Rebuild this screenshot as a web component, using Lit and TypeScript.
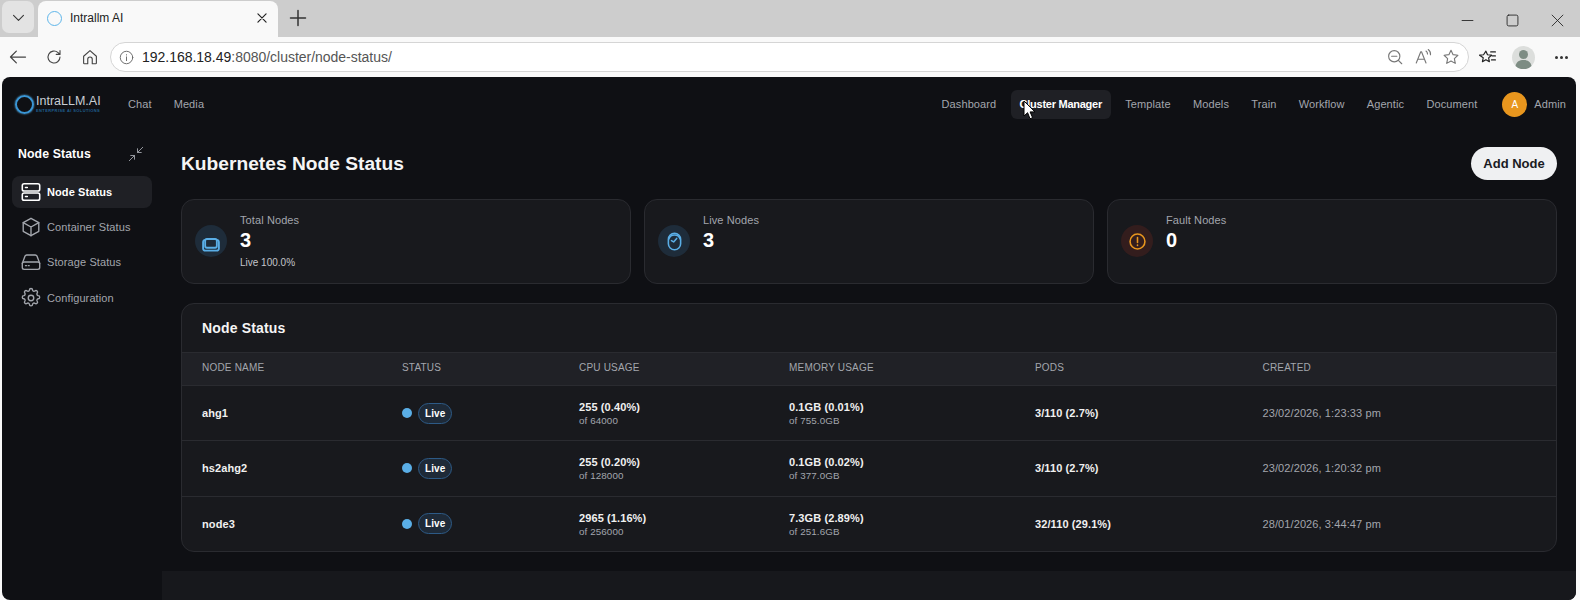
import { LitElement, html, css, svg } from "lit";
import { customElement } from "lit/decorators.js";

const NAV_RIGHT = ["Dashboard", "Cluster Manager", "Template", "Models", "Train", "Workflow", "Agentic", "Document"];

const rows = [
  { name: "ahg1", cpu: "255 (0.40%)", cpuOf: "of 64000", mem: "0.1GB (0.01%)", memOf: "of 755.0GB", pods: "3/110 (2.7%)", created: "23/02/2026, 1:23:33 pm" },
  { name: "hs2ahg2", cpu: "255 (0.20%)", cpuOf: "of 128000", mem: "0.1GB (0.02%)", memOf: "of 377.0GB", pods: "3/110 (2.7%)", created: "23/02/2026, 1:20:32 pm" },
  { name: "node3", cpu: "2965 (1.16%)", cpuOf: "of 256000", mem: "7.3GB (2.89%)", memOf: "of 251.6GB", pods: "32/110 (29.1%)", created: "28/01/2026, 3:44:47 pm" },
];

const icon = (size: number, body: unknown, sw = 1.5) => html`
  <svg width=${size} height=${size} viewBox="0 0 24 24" fill="none" stroke="currentColor" stroke-width=${sw} stroke-linecap="round" stroke-linejoin="round">${body}</svg>
`;

const sideItems = [
  {
    label: "Node Status",
    active: true,
    icon: svg`<rect x="2.500" y="3" width="19" height="8" rx="2"/><rect x="2.500" y="13" width="19" height="8" rx="2"/><path d="M6 7h2M6 17h2"/>`,
  },
  {
    label: "Container Status",
    icon: svg`<path d="M12 2.500l8.500 4.800v9.400L12 21.500l-8.500-4.800V7.300z"/><path d="M3.500 7.300L12 12l8.500-4.700M12 12v9.500"/>`,
  },
  {
    label: "Storage Status",
    icon: svg`<path d="M2.500 13.500L5.500 5.500a2 2 0 0 1 1.800-1.200h9.400a2 2 0 0 1 1.800 1.200l3 8"/><rect x="2.500" y="12" width="19" height="8" rx="2"/><path d="M6 16h1M9 16h1"/>`,
  },
  {
    label: "Configuration",
    icon: svg`<circle cx="12" cy="12" r="3"/><path d="M10.300 3.300a1.700 1.700 0 0 1 3.400 0 1.700 1.700 0 0 0 2.600 1.100 1.700 1.700 0 0 1 2.400 2.400 1.700 1.700 0 0 0 1.100 2.600 1.700 1.700 0 0 1 0 3.400 1.700 1.700 0 0 0-1.100 2.600 1.700 1.700 0 0 1-2.400 2.400 1.700 1.700 0 0 0-2.600 1.100 1.700 1.700 0 0 1-3.400 0 1.700 1.700 0 0 0-2.600-1.100 1.700 1.700 0 0 1-2.400-2.400 1.700 1.700 0 0 0-1.100-2.600 1.700 1.700 0 0 1 0-3.400 1.700 1.700 0 0 0 1.100-2.600 1.700 1.700 0 0 1 2.400-2.400 1.700 1.700 0 0 0 2.600-1.100z"/>`,
  },
];

@customElement("app-root")
export class AppRoot extends LitElement {
  render() {
    return html`
      <div class="tabstrip">
        <div class="tab-menu">${icon(17, svg`<path d="M5 9l7 7 7-7"/>`)}</div>
        <div class="tab">
          <span class="favicon"></span>
          <span class="tab-title">Intrallm AI</span>
          ${icon(14, svg`<path d="M5 5l14 14M19 5L5 19"/>`, 2)}
        </div>
        <div class="new-tab">${icon(20, svg`<path d="M12 3v18M3 12h18"/>`, 1.800)}</div>
        <div class="win-buttons">
          ${icon(13, svg`<path d="M2 12h20"/>`, 1.600)}
          ${icon(13, svg`<rect x="2" y="2" width="20" height="20" rx="3"/>`, 1.600)}
          ${icon(13, svg`<path d="M2 2l20 20M22 2L2 22"/>`, 1.600)}
        </div>
      </div>

      <div class="toolbar">
        <span class="tool back">${icon(20, svg`<path d="M21 12H3M10 5l-7 7 7 7"/>`)}</span>
        <span class="tool">${icon(18, svg`<path d="M20 12a8 8 0 1 1-2.600-5.900L20 8.500M20 3.500v5h-5"/>`)}</span>
        <span class="tool">${icon(18, svg`<path d="M3.500 11L12 3.500l8.500 7.500V20a1 1 0 0 1-1 1H15v-6a3 3 0 0 0-6 0v6H4.500a1 1 0 0 1-1-1z"/>`)}</span>
        <div class="address">
          <span class="addr-info">${icon(15, svg`<circle cx="12" cy="12" r="10"/><path d="M12 11v6M12 7.500v.5"/>`)}</span>
          <span class="url"><span class="host">192.168.18.49</span>:8080/cluster/node-status/</span>
          <span class="addr-actions">
            ${icon(18, svg`<circle cx="11" cy="11" r="7.500"/><path d="M16.500 16.500L21 21M7.500 11h7"/>`)}
            ${icon(18, svg`<path d="M3 20L9 5h1l6 15M5.500 15h8.500M16 4a5 5 0 0 1 2 4M19 2a8 8 0 0 1 3 7"/>`)}
            ${icon(18, svg`<path d="M12 3l2.800 5.900 6.400.8-4.700 4.400 1.200 6.400L12 17.400l-5.700 3.100 1.200-6.400L2.800 9.700l6.400-.8z"/>`)}
          </span>
        </div>
        <span class="tool favs">${icon(19, svg`<path d="M10 4l2 4.500 5 .6-3.600 3.300 1 4.900-4.400-2.500-4.400 2.500 1-4.900L2 9.100l5-.6zM16 5h6M18 10h4M17 15h5"/>`)}</span>
        <span class="profile">
          <svg width="23" height="23" viewBox="0 0 23 23"><circle cx="11.500" cy="11.500" r="11.500" fill="#dcdedc"/><circle cx="11.500" cy="8.500" r="4.500" fill="#7d8c83"/><path d="M3.500 20c1-4.500 4-6 8-6s7 1.500 8 6a11.500 11.500 0 0 1-16 0z" fill="#7d8c83"/></svg>
        </span>
        <span class="more"><i></i><i></i><i></i></span>
      </div>

      <div class="frame">
        <div class="app">
          <header class="topnav">
            <div class="logo">
              <span class="logo-ring"></span>
              <span class="logo-text">
                <span class="logo-name">IntraLLM.AI</span>
                <span class="logo-sub">ENTERPRISE AI SOLUTIONS</span>
              </span>
            </div>
            <nav class="nav-left"><a>Chat</a><a>Media</a></nav>
            <nav class="nav-right">
              ${NAV_RIGHT.map((n) => html`<a class=${n === "Cluster Manager" ? "active" : ""}>${n}</a>`)}
            </nav>
            <div class="user"><span class="avatar">A</span><span>Admin</span></div>
            <svg class="cursor" width="14" height="20" viewBox="0 0 14 20"><path d="M1 1v15l3.600-3.300 2.400 6 2.600-1-2.500-5.800H12z" fill="#fff" stroke="#000" stroke-width="1"/></svg>
          </header>

          <div class="body">
            <aside class="sidebar">
              <div class="side-head">
                <span>Node Status</span>
                ${icon(18, svg`<path d="M21 3l-7 7M14 5v5h5M3 21l7-7M10 19v-5H5"/>`, 1.200)}
              </div>
              ${sideItems.map(
                (s) => html`
                  <div class="side-item ${s.active ? "active" : ""}">
                    ${icon(22, s.icon, s.active ? 1.700 : 1.500)}
                    <span>${s.label}</span>
                  </div>
                `
              )}
            </aside>

            <main class="main">
              <div class="page-head">
                <h1>Kubernetes Node Status</h1>
                <button class="add">Add Node</button>
              </div>

              <div class="cards">
                <div class="card">
                  <span class="badge blue total">${icon(20, svg`<rect x="2.500" y="7" width="19" height="13" rx="3"/><rect x="5" y="6" width="14" height="10.500" rx="2" fill="#1e2c3a"/>`, 2.200)}</span>
                  <div class="card-text">
                    <span class="card-label">Total Nodes</span>
                    <span class="card-value">3</span>
                    <span class="card-sub">Live 100.0%</span>
                  </div>
                </div>
                <div class="card">
                  <span class="badge blue">${icon(21, svg`<rect x="5" y="2.500" width="14" height="19" rx="7"/><path d="M5.500 9a7 7 0 0 1 13 0M8.500 11l2.500 1.500 3.500-4"/>`, 1.800)}</span>
                  <div class="card-text">
                    <span class="card-label">Live Nodes</span>
                    <span class="card-value">3</span>
                  </div>
                </div>
                <div class="card">
                  <span class="badge red">${icon(21, svg`<circle cx="12" cy="12" r="8.500"/><path d="M12 7.500v5.500M12 16v.500"/>`, 1.800)}</span>
                  <div class="card-text">
                    <span class="card-label">Fault Nodes</span>
                    <span class="card-value">0</span>
                  </div>
                </div>
              </div>

              <section class="table">
                <div class="table-title">Node Status</div>
                <div class="row thead">
                  <span>NODE NAME</span><span>STATUS</span><span>CPU USAGE</span><span>MEMORY USAGE</span><span>PODS</span><span>CREATED</span>
                </div>
                ${rows.map(
                  (r) => html`
                    <div class="row tr">
                      <span class="strong">${r.name}</span>
                      <span class="status"><i class="dot"></i><span class="pill">Live</span></span>
                      <span class="usage"><b>${r.cpu}</b><small>${r.cpuOf}</small></span>
                      <span class="usage"><b>${r.mem}</b><small>${r.memOf}</small></span>
                      <span class="strong">${r.pods}</span>
                      <span class="created">${r.created}</span>
                    </div>
                  `
                )}
              </section>
              <div class="footer-band"></div>
            </main>
          </div>
        </div>
      </div>
    `;
  }

  static styles = css`
    :host {
      display: block;
      width: 1580px;
      height: 600px;
      overflow: hidden;
      background: #f9f9f9;
      font-family: "Liberation Sans", sans-serif;
    }

    /* browser chrome */
    .tabstrip {
      height: 37px;
      background: #cdcdcd;
      display: flex;
      align-items: flex-end;
      position: relative;
    }
    .tab-menu {
      width: 32px;
      height: 32px;
      margin: 0 4px 4px 2px;
      border-radius: 7px;
      background: #e3e3e3;
      display: flex;
      align-items: center;
      justify-content: center;
      color: #333;
    }
    .tab {
      width: 240px;
      height: 36px;
      box-sizing: border-box;
      background: #f9f9f9;
      border-radius: 8px 8px 0 0;
      display: flex;
      align-items: center;
      padding: 0 9px 2px 9px;
      font-size: 12px;
      color: #222;
    }
    .favicon {
      width: 13px;
      height: 13px;
      border: 1.500px solid #5fb6ea;
      border-radius: 50%;
      margin-right: 8px;
    }
    .tab-title {
      flex: 1;
    }
    .new-tab {
      margin: 0 0 3px 10px;
      height: 32px;
      display: flex;
      align-items: center;
      color: #333;
    }
    .win-buttons {
      margin-left: auto;
      height: 34px;
      padding-right: 16px;
      display: flex;
      align-items: center;
      gap: 32px;
      color: #222;
    }
    .toolbar {
      height: 40px;
      background: #f9f9f9;
      display: flex;
      align-items: center;
      color: #444;
    }
    .tool {
      display: flex;
      width: 36px;
      justify-content: center;
    }
    .address {
      width: 1359px;
      height: 30px;
      box-sizing: border-box;
      margin-left: 2px;
      border: 1px solid #d5d5d5;
      border-radius: 15px;
      background: #fff;
      display: flex;
      align-items: center;
      padding: 0 8px 0 8px;
      font-size: 14px;
      letter-spacing: -0.020px;
      color: #555;
    }
    .addr-info {
      display: flex;
      margin-right: 8px;
      color: #666;
    }
    .host {
      color: #222;
    }
    .addr-actions {
      margin-left: auto;
      display: flex;
      gap: 10px;
      color: #777;
    }
    .favs {
      margin-left: 0;
      color: #222;
    }
    .profile {
      display: flex;
      margin-left: 7px;
    }
    .more {
      display: flex;
      gap: 2px;
      margin-left: 20px;
    }
    .more i {
      width: 3px;
      height: 3px;
      border-radius: 50%;
      background: #333;
    }

    /* app */
    .frame {
      height: 523px;
      padding: 0 4px 0 2px;
    }
    .app {
      height: 100%;
      background: #0f1014;
      border-radius: 8px;
      overflow: hidden;
      color: #fff;
    }
    .topnav {
      height: 54px;
      box-sizing: border-box;
      display: flex;
      align-items: center;
      padding: 0 10px 0 13px;
      position: relative;
      font-size: 11px;
      letter-spacing: 0.100px;
      color: #a3a6ad;
    }
    .logo {
      display: flex;
      align-items: center;
      width: 113px;
    }
    .logo-ring {
      width: 15px;
      height: 15px;
      border: 2px solid #3a96d6;
      border-radius: 50%;
      margin-right: 2px;
      box-shadow: 0 0 2px #5fb6ea;
    }
    .logo-text {
      display: flex;
      flex-direction: column;
      width: 64px;
    }
    .logo-name {
      font-size: 12.500px;
      line-height: 13px;
      color: #c9ced4;
      letter-spacing: 0;
    }
    .logo-sub {
      font-size: 4px;
      line-height: 5px;
      letter-spacing: 0.400px;
      color: #1f5f8f;
      white-space: nowrap;
      font-weight: 700;
    }
    .nav-left {
      display: flex;
      gap: 22px;
    }
    .nav-right {
      margin-left: auto;
      display: flex;
      gap: 2.250px;
    }
    .nav-right a {
      padding: 0 10px;
      height: 29px;
      line-height: 29px;
      border-radius: 6px;
    }
    .nav-right a.active {
      background: #1f2025;
      color: #fff;
      font-weight: 700;
      letter-spacing: -0.250px;
      padding: 0 9px;
      margin: 0 2px;
    }
    .user {
      display: flex;
      align-items: center;
      gap: 7px;
      margin-left: 15px;
    }
    .avatar {
      width: 25px;
      height: 25px;
      border-radius: 50%;
      background: #e8961e;
      color: #fff;
      font-size: 10px;
      display: flex;
      align-items: center;
      justify-content: center;
    }
    .cursor {
      position: absolute;
      left: 1021px;
      top: 23px;
    }

    .body {
      display: flex;
      height: 469px;
    }
    .sidebar {
      width: 160px;
      flex: none;
      box-sizing: border-box;
      padding: 0 10px;
      font-size: 11px;
      letter-spacing: 0.100px;
      color: #a3a6ad;
    }
    .side-head {
      height: 45px;
      display: flex;
      align-items: center;
      justify-content: space-between;
      padding: 0 7px 0 6px;
      font-size: 12.300px;
      font-weight: 700;
      color: #fff;
    }
    .side-head svg {
      color: #a3a6ad;
    }
    .side-item {
      height: 32px;
      margin-bottom: 3.200px;
      border-radius: 8px;
      display: flex;
      align-items: center;
      gap: 5px;
      padding: 0 8px;
    }
    .side-item.active {
      background: #1f2025;
      color: #fff;
      font-weight: 700;
    }

    .main {
      flex: 1;
      min-width: 0;
      box-sizing: border-box;
      padding: 16px 19px 0 19px;
      position: relative;
    }
    .page-head {
      height: 33px;
      display: flex;
      align-items: center;
      justify-content: space-between;
    }
    h1 {
      margin: 0;
      font-size: 19.200px;
      font-weight: 700;
      color: #f5f5f5;
    }
    .add {
      width: 86px;
      height: 33px;
      border: none;
      border-radius: 17px;
      background: #eff0f2;
      color: #1a1b1f;
      font: 700 13px "Liberation Sans", sans-serif;
    }
    .cards {
      display: grid;
      grid-template-columns: repeat(3, 1fr);
      gap: 13px;
      margin-top: 19px;
    }
    .card {
      height: 85px;
      box-sizing: border-box;
      background: #18191d;
      border: 1px solid #2a2b30;
      border-radius: 13px;
      display: flex;
      padding: 13px;
      gap: 13px;
    }
    .badge {
      width: 32px;
      height: 32px;
      margin-top: 12px;
      border-radius: 50%;
      display: flex;
      align-items: center;
      justify-content: center;
    }
    .badge.total {
      padding-top: 5px;
      box-sizing: border-box;
    }
    .badge.blue {
      background: #1e2c3a;
      color: #5aaee6;
    }
    .badge.red {
      background: #331d1d;
      color: #e8961e;
    }
    .card-text {
      display: flex;
      flex-direction: column;
    }
    .card-label {
      font-size: 11px;
      line-height: 14px;
      letter-spacing: 0.100px;
      color: #a3a6ad;
    }
    .card-value {
      font-size: 20px;
      line-height: 26px;
      font-weight: 700;
      color: #fff;
    }
    .card-sub {
      font-size: 10px;
      line-height: 14px;
      margin-top: 3px;
      color: #c3c5ca;
    }
    .table {
      margin-top: 19px;
      background: #18191d;
      border: 1px solid #2a2b30;
      border-radius: 13px;
      overflow: hidden;
    }
    .table-title {
      height: 48px;
      box-sizing: border-box;
      padding-left: 20px;
      display: flex;
      align-items: center;
      font-size: 14px;
      letter-spacing: 0.150px;
      font-weight: 700;
      color: #f5f5f5;
    }
    .row {
      display: grid;
      box-sizing: border-box;
      grid-template-columns: 200px 177px 210px 246px 227.500px 1fr;
      align-items: center;
      padding-left: 20px;
      border-top: 1px solid #2a2b30;
    }
    .thead {
      height: 33px;
      padding-bottom: 3px;
      background: #202126;
      font-size: 10px;
      letter-spacing: 0.200px;
      color: #a3a6ad;
    }
    .tr {
      height: 55.300px;
      font-size: 11px;
      letter-spacing: 0.100px;
    }
    .strong {
      font-weight: 700;
      color: #f0f0f0;
    }
    .status {
      display: flex;
      align-items: center;
      gap: 6px;
    }
    .dot {
      width: 10px;
      height: 10px;
      border-radius: 50%;
      background: #5aaee6;
    }
    .pill {
      height: 21px;
      box-sizing: border-box;
      padding: 0 6px;
      border: 1px solid #2d5a86;
      border-radius: 11px;
      background: #1e2a38;
      display: flex;
      align-items: center;
      font-size: 10px;
      font-weight: 700;
      color: #fff;
    }
    .usage {
      display: flex;
      flex-direction: column;
      padding-top: 2px;
    }
    .usage b {
      font-weight: 700;
      font-size: 11px;
      line-height: 13px;
      color: #f0f0f0;
    }
    .usage small {
      font-size: 9.800px;
      line-height: 13px;
      color: #a3a6ad;
    }
    .created {
      color: #a3a6ad;
    }
    .footer-band {
      position: absolute;
      left: 0;
      right: 0;
      bottom: 0;
      height: 29px;
      background: #17181c;
    }
  `;
}
